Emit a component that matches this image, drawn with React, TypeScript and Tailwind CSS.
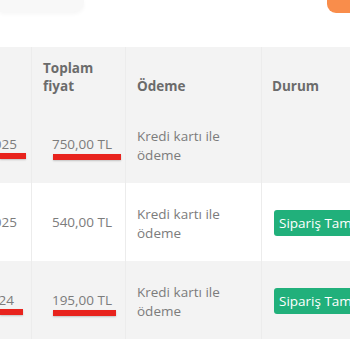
const rows = [
  { date: "025", datePad: "pr-[14px]", amount: "750,00 TL", marked: true, status: false, bg: "bg-[#f3f3f3]", dateBar: "w-[26px]", amountBar: "left-[21px] w-[68px]" },
  { date: "025", datePad: "pr-[14px]", amount: "540,00 TL", marked: false, status: true, bg: "bg-white", dateBar: "", amountBar: "" },
  { date: "24", datePad: "pr-[17px]", amount: "195,00 TL", marked: true, status: true, bg: "bg-[#f3f3f3]", dateBar: "w-[23px]", amountBar: "left-[21px] w-[63px]" },
];

export default function App() {
  return (
    <div className="w-[350px] h-[350px] overflow-hidden bg-white font-['Open_Sans',sans-serif]">
      <div className="flex justify-between items-start h-[47px]">
        <div className="w-[84px] h-[12px] bg-[#f8f8f8] rounded-br-[10px] shadow-[0_2px_4px_rgba(0,0,0,0.04)]"></div>
        <div className="w-[23px] h-[13px] bg-[#f98d4b] rounded-bl-[9px]"></div>
      </div>

      <div className="grid grid-cols-[32px_94px_136px_1fr] bg-[#f3f3f3] text-[13.5px] leading-[18px] font-bold text-[#6b6b6b]">
        <div className="border-r border-[#ececec]"></div>
        <div className="pl-[11px] pr-[14px] pt-3 pb-[10px] flex items-end border-r border-[#ececec]">Toplam fiyat</div>
        <div className="pl-[11px] pt-3 pb-[10px] flex items-end border-r border-[#ececec]">Ödeme</div>
        <div className="pl-[10px] pt-3 pb-[10px] flex items-end">Durum</div>
      </div>

      {rows.map((r, i) => (
        <div key={i} className={`grid grid-cols-[32px_94px_136px_1fr] ${r.bg} text-[13.5px] leading-[19px] text-[#7c7c7c]`}>
          <div className={`relative flex items-center justify-end ${r.datePad} border-r border-[#ececec] overflow-hidden`}>
            {r.date}
            {r.marked && <div className={`absolute left-0 top-[48px] h-[6px] ${r.dateBar} bg-[#e8231d] shadow-[0_1px_2px_rgba(0,0,0,0.2)]`}></div>}
          </div>
          <div className="relative flex items-center justify-end pr-[13px] border-r border-[#ececec]">
            {r.amount}
            {r.marked && <div className={`absolute top-[49px] h-[6px] ${r.amountBar} bg-[#e8231d] shadow-[0_1px_2px_rgba(0,0,0,0.2)]`}></div>}
          </div>
          <div className="pl-[11px] pr-[11px] pt-[22px] pb-[18px] border-r border-[#ececec]">Kredi kartı ile ödeme</div>
          <div className="flex items-center pl-[12px] pt-[2px] whitespace-nowrap">
            {r.status && (
              <span className="bg-[#21b07b] text-white rounded-[3px] px-[5px] h-[26px] flex items-center text-[13.5px]">
                Sipariş Tamamlandı
              </span>
            )}
          </div>
        </div>
      ))}
    </div>
  );
}
